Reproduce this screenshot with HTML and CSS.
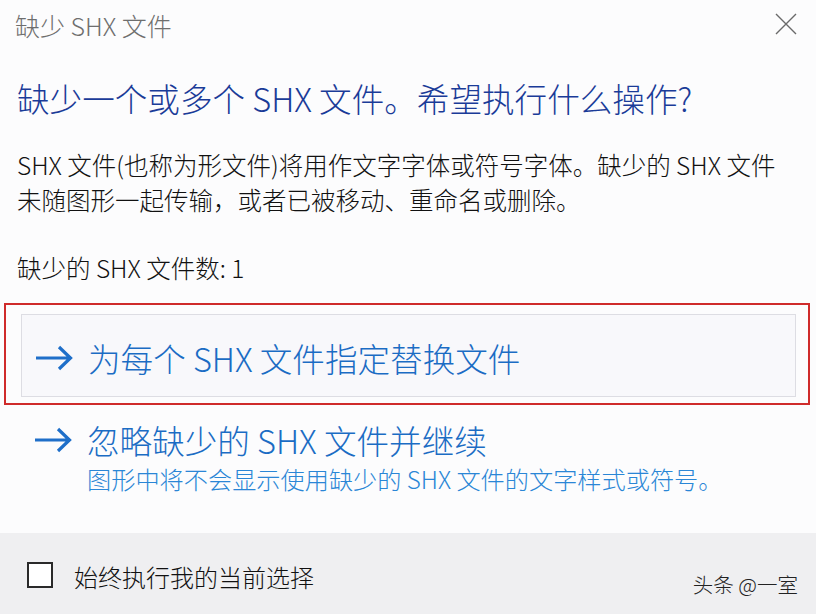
FILE: index.html
```html
<!DOCTYPE html>
<html lang="zh-CN">
<head>
<meta charset="utf-8">
<title>缺少 SHX 文件</title>
<link rel="stylesheet" href="styles.css">
</head>
<body>
<div class="dialog">
  <div class="main">
    <div class="titlebar">
      <span class="title">缺少 SHX 文件</span>
      <svg class="close" width="22" height="22" viewBox="0 0 22 22"><path d="M1 1 L21 21 M21 1 L1 21" stroke="#6a6a6a" stroke-width="1.4" fill="none"/></svg>
    </div>
    <h1 class="heading">缺少一个或多个 SHX 文件。希望执行什么操作?</h1>
    <p class="body">SHX 文件(也称为形文件)将用作文字字体或符号字体。缺少的 SHX 文件<br>未随图形一起传输，或者已被移动、重命名或删除。</p>
    <p class="count">缺少的 SHX 文件数: 1</p>
    <div class="highlight">
      <div class="option option-boxed">
        <svg class="arrow" width="38" height="26" viewBox="0 0 38 26"><path d="M1 13 H35 M24 2 L35.5 13 L24 24" stroke="#1f6fc9" stroke-width="3.2" fill="none" stroke-linejoin="miter"/></svg>
        <span class="option-text">为每个 SHX 文件指定替换文件</span>
      </div>
    </div>
    <div class="option option-plain">
      <svg class="arrow" width="38" height="26" viewBox="0 0 38 26"><path d="M1 13 H35 M24 2 L35.5 13 L24 24" stroke="#1f6fc9" stroke-width="3.2" fill="none" stroke-linejoin="miter"/></svg>
      <span class="option-text">忽略缺少的 SHX 文件并继续</span>
    </div>
    <p class="option-sub">图形中将不会显示使用缺少的 SHX 文件的文字样式或符号。</p>
  </div>
  <div class="footer">
    <span class="checkbox"></span>
    <span class="check-label">始终执行我的当前选择</span>
    <span class="watermark">头条 @一室</span>
  </div>
</div>
</body>
</html>
```
FILE: styles.css
```css
* { box-sizing: border-box; }
html, body { margin: 0; padding: 0; }
body {
  width: 816px;
  height: 614px;
  overflow: hidden;
  font-family: "Noto Sans CJK SC", "Noto Sans", sans-serif;
  font-weight: 300;
  background: #fcfcfd;
}
.dialog {
  width: 816px;
  height: 614px;
  display: flex;
  flex-direction: column;
}
.main {
  flex: 0 0 533px;
  background: #fcfcfd;
  display: flex;
  flex-direction: column;
}
.titlebar {
  height: 50px;
  display: flex;
  align-items: center;
  justify-content: space-between;
  padding: 0 19px 0 15px;
}
.title {
  font-size: 25px;
  font-weight: 300;
  color: #6e6e6e;
  line-height: 30px;
}
.close { display: block; margin-top: -2px; }
.heading {
  margin: 28px 0 0 17px;
  font-size: 32.6px;
  line-height: 40px;
  font-weight: 300;
  color: #1a3b98;
}
.body {
  margin: 29px 0 0 17px;
  font-size: 24.5px;
  line-height: 35px;
  color: #111;
}
.count {
  margin: 33px 0 0 17px;
  font-size: 24.5px;
  line-height: 35px;
  color: #111;
}
.highlight {
  margin: 18px 6px 0 4px;
  border: 2px solid #cf2b2b;
  padding: 9px 12px 6px 15px;
}
.option {
  display: flex;
  align-items: center;
}
.option-boxed {
  height: 83px;
  border: 1px solid #dddde3;
  background: #f8f8fb;
  padding: 4px 0 0 13px;
}
.option-plain {
  margin: 15px 0 0 34px;
}
.arrow { display: block; flex: 0 0 auto; }
.option-text {
  margin-left: 15px;
  font-size: 32.6px;
  line-height: 40px;
  color: #1b6cc4;
}
.option-sub {
  margin: 4px 0 0 87px;
  font-size: 24.2px;
  line-height: 30px;
  color: #2a86d6;
}
.footer {
  flex: 1 1 auto;
  background: #efeff1;
  display: flex;
  align-items: center;
  padding: 0 0 0 27px;
}
.checkbox {
  width: 26px;
  height: 26px;
  border: 2px solid #2a2a2a;
  background: #fff;
  margin-top: 2px;
}
.check-label {
  margin-left: 21px;
  font-size: 24px;
  line-height: 30px;
  color: #111;
  margin-top: 6px;
}
.watermark {
  margin-left: auto;
  margin-right: 18px;
  margin-top: 20px;
  font-size: 20.5px;
  line-height: 24px;
  color: #222;
}
```
